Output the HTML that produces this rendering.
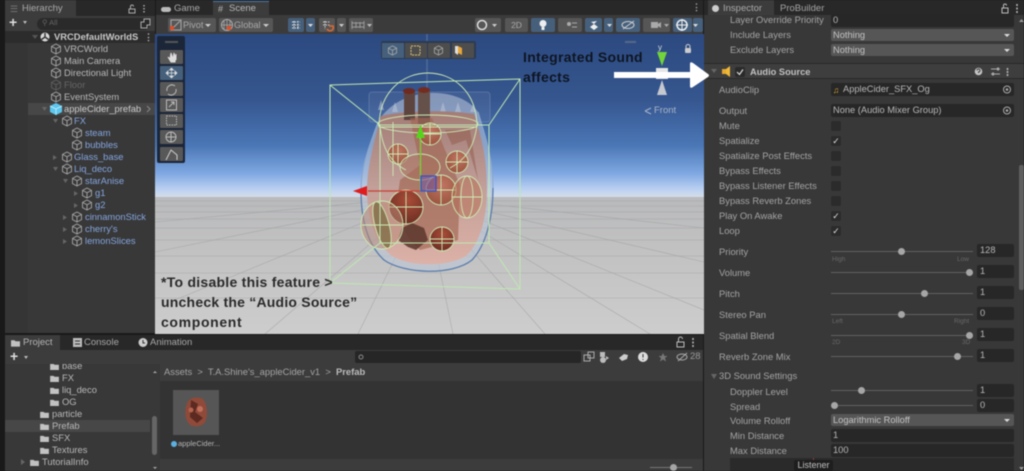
<!DOCTYPE html>
<html lang="en"><head><meta charset="utf-8"><title>Unity Audio Source</title>
<style>
html,body{margin:0;padding:0;background:#191919}
#p{position:relative;width:1024px;height:471px;overflow:hidden;background:#191919;font-family:"Liberation Sans",sans-serif;font-size:9px;color:#b8b8b8;filter:blur(.4px)}
#p div,#p span.t{position:absolute;white-space:nowrap}
.t{line-height:12px;height:12px}
.b{color:#85a5de}
.l{color:#a4a4a4;font-size:9.400px;left:719px}
.l2{left:730px}
.f{background:#272727;border-radius:2px;height:13px;line-height:13px;padding-left:2px;box-sizing:border-box;color:#b8b8b8;font-size:9.300px}
.d{background:#565656;border-radius:2px;left:831px;width:183px;height:12px;line-height:12px;padding-left:2px;box-sizing:border-box;color:#c4c4c4;font-size:9.300px}
.d:after{content:"";position:absolute;right:4px;top:5px;border:3px solid transparent;border-top:3px solid #ddd;border-bottom:0}
.c{left:831px;width:10px;height:10px;background:#2b2b2b;border-radius:2px;color:#ddd;font-size:9px;line-height:10px;text-align:center}
.s{left:831px;width:142px;height:1px;background:#626262}
.th{width:7px;height:7px;border-radius:50%;background:#a6a6a6}
.n{left:977px;width:37px;height:13px;line-height:13px;background:#272727;border-radius:2px;padding-left:3px;box-sizing:border-box;color:#b8b8b8;font-size:9.300px}
.m{font-size:6.500px;color:#686868;line-height:8px}
.btn{top:18px;height:14px;background:#565656;border-radius:2px}
.blue{background:#46607c}
.tool{left:160px;width:23px;height:14px;background:#585858;border-radius:1px}
.mini{top:43px;width:22px;height:15px;background:#4d4d4d}
.cap{font-weight:bold;color:#161616;font-size:14px;line-height:20px;height:20px}
</style></head><body>
<div id="p">
<svg width="0" height="0" style="position:absolute"><defs>
<symbol id="cube" viewBox="0 0 12 12"><path d="M6 1 10.500 3.400V8.600L6 11 1.500 8.600V3.400ZM1.500 3.400 6 5.800 10.500 3.400M6 5.800V11" fill="none" stroke="#a8a8a8" stroke-width=".9"/></symbol>
<symbol id="folder" viewBox="0 0 10 8"><path d="M0 1H4L5 2H10V8H0Z" fill="#c2c2c2"/></symbol>
</defs></svg>

<!-- Hierarchy -->
<div style="left:5px;top:0;width:150px;height:333px;background:#383838"></div>
<div style="left:5px;top:0;width:150px;height:16px;background:#282828"></div>
<div style="left:5px;top:0;width:71px;height:16px;background:#3c3c3c"></div>
<div class="t" style="left:10px;top:3px;color:#777">☰</div>
<div class="t" style="left:22px;top:3px;font-size:9.500px;color:#aaa">Hierarchy</div>
<svg style="position:absolute;left:127px;top:3px" width="20" height="11"><path d="M2 6H8V10H2ZM3.500 6V3.500A1.500 1.500 0 0 1 6.500 3.500" fill="none" stroke="#aaa"/><path d="M17 2V3.500M17 5V6.500M17 8V9.500" stroke="#aaa" stroke-width="1.500"/></svg>
<div style="left:5px;top:16px;width:150px;height:15px;background:#3c3c3c"></div>
<div class="t" style="left:9px;top:16px;font-size:14px;font-weight:bold;color:#ddd">+</div>
<div style="left:23px;top:21px;border:2.500px solid transparent;border-top:3px solid #bbb;border-bottom:0"></div>
<div style="left:37px;top:18px;width:113px;height:12px;background:#2a2a2a;border-radius:6px"></div>
<div class="t" style="left:42px;top:17px;font-size:7.500px;color:#666">⚲ All</div>
<svg style="position:absolute;left:140px;top:18px" width="11" height="11"><path d="M4 1H10V7H7V10H1V4H4Z" fill="none" stroke="#aaa"/></svg>
<div style="left:5px;top:31px;width:150px;height:12px;background:#2c2c2c"></div>
<div style="left:5px;top:103px;width:150px;height:12px;background:#474747"></div>
<div style="left:5px;top:43px;width:23px;height:290px;background:#353535"></div>
<div class="t" style="left:54px;top:31px;font-weight:bold;font-size:9.400px;color:#c8c8c8">VRCDefaultWorldS</div>
<svg style="position:absolute;left:31px;top:32px" width="20" height="10"><path d="M1 3H7L4 7Z" fill="#555"/><circle cx="14" cy="5" r="4.500" fill="#d8d8d8"/><path d="M14 5 14 1M14 5 10.500 7.500M14 5 17.500 7.500" stroke="#333" stroke-width="1.400"/></svg>
<div class="t" style="left:144px;top:31px;font-weight:bold;color:#bbb">⋮</div>
<svg style="position:absolute;left:0;top:0" width="155" height="250">
<g>
<use href="#cube" x="50" y="43" width="12" height="12"/><use href="#cube" x="50" y="55" width="12" height="12"/><use href="#cube" x="50" y="67" width="12" height="12"/><use href="#cube" x="50" y="79" width="12" height="12" opacity=".35"/><use href="#cube" x="50" y="91" width="12" height="12"/>
<use href="#cube" x="61" y="115" width="12" height="12"/><use href="#cube" x="71" y="127" width="12" height="12"/><use href="#cube" x="71" y="139" width="12" height="12"/><use href="#cube" x="61" y="151" width="12" height="12"/><use href="#cube" x="61" y="163" width="12" height="12"/><use href="#cube" x="71" y="175" width="12" height="12"/><use href="#cube" x="81" y="187" width="12" height="12"/><use href="#cube" x="81" y="199" width="12" height="12"/><use href="#cube" x="71" y="211" width="12" height="12"/><use href="#cube" x="71" y="223" width="12" height="12"/><use href="#cube" x="71" y="235" width="12" height="12"/>
</g>
<path d="M56 103 62 106V112L56 115 50 112V106Z" fill="#5cc6ee"/><path d="M50 106 56 109 62 106M56 109V115" stroke="#d8f2fb" stroke-width=".7" fill="none"/>
<path d="M42 107H47L44.500 111ZM53 119H58L55.500 123ZM53 167H58L55.500 171ZM63 179H68L65.500 183Z" fill="#666"/>
<path d="M53 155V160L57 157.500ZM74 191V196L78 193.500ZM74 203V208L78 205.500ZM63 215V220L67 217.500ZM63 227V232L67 229.500ZM63 239V244L67 241.500Z" fill="#666"/>
<path d="M147 106 150 109 147 112" fill="none" stroke="#888"/>
</svg>
<div class="t" style="left:64px;top:43px;font-size:9.400px">VRCWorld</div>
<div class="t" style="left:64px;top:55px;font-size:9.400px">Main Camera</div>
<div class="t" style="left:64px;top:67px;font-size:9.400px">Directional Light</div>
<div class="t" style="left:64px;top:79px;font-size:9.400px;color:#666">Floor</div>
<div class="t" style="left:64px;top:91px;font-size:9.400px">EventSystem</div>
<div class="t" style="left:64px;top:103px;font-size:9.400px;color:#cccccc">appleCider_prefab</div>
<div class="t b" style="left:74px;top:115px;font-size:9.400px">FX</div>
<div class="t b" style="left:85px;top:127px;font-size:9.400px">steam</div>
<div class="t b" style="left:85px;top:139px;font-size:9.400px">bubbles</div>
<div class="t b" style="left:74px;top:151px;font-size:9.400px">Glass_base</div>
<div class="t b" style="left:74px;top:163px;font-size:9.400px">Liq_deco</div>
<div class="t b" style="left:85px;top:175px;font-size:9.400px">starAnise</div>
<div class="t b" style="left:95px;top:187px;font-size:9.400px">g1</div>
<div class="t b" style="left:95px;top:199px;font-size:9.400px">g2</div>
<div class="t b" style="left:85px;top:211px;font-size:9.400px">cinnamonStick</div>
<div class="t b" style="left:85px;top:223px;font-size:9.400px">cherry's</div>
<div class="t b" style="left:85px;top:235px;font-size:9.400px">lemonSlices</div>

<!-- Scene tabs and toolbar -->
<div style="left:156px;top:0;width:547px;height:15px;background:#282828"></div>
<div style="left:213px;top:1px;width:56px;height:14px;background:#3c3c3c;border-top:1px solid #4a78a8;box-sizing:border-box"></div>
<div class="t" style="left:174px;top:3px;font-size:9.500px;color:#aaa">Game</div>
<div class="t" style="left:229px;top:3px;font-size:9.500px;color:#b8b8b8">Scene</div>
<div style="left:161px;top:7px;width:10px;height:5px;background:#bbb;border-radius:3px"></div>
<div class="t" style="left:218px;top:3px;font-size:9px;color:#bbb">#</div>
<div class="t" style="left:692px;top:1px;color:#aaa;font-weight:bold">⋮</div>
<div style="left:156px;top:15px;width:547px;height:19px;background:#3b3b3b"></div>
<div class="btn" style="left:168px;width:48px"></div><div class="btn" style="left:219px;width:54px"></div>
<div class="t" style="left:183px;top:19px;color:#a8a8a8;font-size:9.200px">Pivot</div>
<div class="t" style="left:234px;top:19px;color:#a8a8a8;font-size:9.200px">Global</div>
<svg style="position:absolute;left:170px;top:19px" width="100" height="12"><rect x="1" y="1" width="10" height="10" fill="none" stroke="#aaa"/><path d="M2 10 10 2" stroke="#aaa"/><rect x="0" y="7" width="4" height="4" fill="#d9502a"/><path d="M35 5H41L38 8Z" fill="#ccc"/><circle cx="57" cy="6" r="5.500" fill="none" stroke="#aaa"/><path d="M52 6H62M57 1V11M54 2V10M60 2V10" stroke="#aaa" stroke-width=".7"/><rect x="57" y="7" width="4" height="4" fill="#d9502a"/><path d="M93 5H99L96 8Z" fill="#ccc"/></svg>
<div class="btn blue" style="left:288px;width:16px"></div><div class="btn blue" style="left:306px;width:9px"></div>
<div class="btn" style="left:319px;width:16px"></div><div class="btn" style="left:337px;width:9px"></div>
<div class="btn" style="left:349px;width:24px"></div>
<svg style="position:absolute;left:288px;top:18px" width="90" height="14"><path d="M4 4H12M4 7H12M4 10H12M6 3V11M10 3V11" stroke="#ddd" stroke-dasharray="1.500 1"/><path d="M20 6H25L22.500 9Z" fill="#ddd"/><path d="M35 4H42M35 7H42M37 3V11" stroke="#ccc" stroke-dasharray="1.500 1"/><path d="M39 11A3 3 0 0 0 45 8H41" stroke="#e06a30" stroke-width="1.500" fill="none"/><path d="M51 6H56L53.500 9Z" fill="#ccc"/><path d="M64 3V11M68 4V10M72 4V10M76 3V11M64 5H76M64 9H76" stroke="#999"/><path d="M79 6H84L81.500 9Z" fill="#bbb"/></svg>
<div class="btn" style="left:475px;width:26px"></div><div class="btn" style="left:505px;width:23px;text-align:center;line-height:14px;color:#aaa;font-size:8.500px">2D</div>
<div class="btn blue" style="left:531px;width:24px"></div><div class="btn" style="left:558px;width:24px"></div>
<div class="btn blue" style="left:585px;width:17px"></div><div class="btn blue" style="left:604px;width:9px"></div>
<div class="btn blue" style="left:616px;width:24px"></div><div class="btn" style="left:643px;width:27px"></div>
<div class="btn blue" style="left:673px;width:19px"></div><div class="btn blue" style="left:693px;width:10px"></div>
<svg style="position:absolute;left:474px;top:18px" width="229" height="14"><circle cx="8" cy="7" r="4.500" fill="none" stroke="#ddd" stroke-width="1.500"/><path d="M18 6H23L20.500 9Z" fill="#ccc"/><circle cx="69" cy="5.500" r="3.500" fill="#eee"/><rect x="67.500" y="9" width="3" height="3" fill="#eee"/><circle cx="95" cy="6" r="2" fill="#aaa"/><path d="M98 5H103M98 9H103" stroke="#aaa"/><path d="M116 9 120 6 124 9 120 12ZM117 4 120 6 123 3" fill="#eee"/><path d="M133 6H138L135.500 9Z" fill="#ddd"/><ellipse cx="154" cy="7" rx="6" ry="3.500" fill="none" stroke="#ccc"/><path d="M149 11 160 3" stroke="#ccc"/><rect x="177" y="4" width="7" height="6" fill="#aaa"/><path d="M184 6 187 4V10L184 8ZM190 6H195L192.500 9Z" fill="#aaa"/><circle cx="208" cy="7" r="5" fill="none" stroke="#eee" stroke-width="1.500"/><path d="M202 7H214M208 1V13" stroke="#eee"/><path d="M219 6H224L221.500 9Z" fill="#ddd"/></svg>

<!-- Scene view -->
<svg style="position:absolute;left:155px;top:34px" width="549" height="300" viewBox="155 34 549 300">
<defs>
<linearGradient id="sky" x1="0" y1="0" x2="0" y2="1"><stop offset="0" stop-color="#2c4a80"/><stop offset=".4" stop-color="#36568f"/><stop offset=".68" stop-color="#4b77b6"/><stop offset=".85" stop-color="#7fa8e2"/><stop offset=".95" stop-color="#bcd2f2"/><stop offset="1" stop-color="#d8dee8"/></linearGradient>
<linearGradient id="gr" x1="0" y1="0" x2="0" y2="1"><stop offset="0" stop-color="#b9babc"/><stop offset=".4" stop-color="#c2c2c2"/><stop offset="1" stop-color="#cdcdcd"/></linearGradient>
<linearGradient id="liq" x1="0" y1="0" x2="0" y2="1"><stop offset="0" stop-color="#a67a70"/><stop offset=".5" stop-color="#c39c92"/><stop offset="1" stop-color="#dfb0a4"/></linearGradient>
<radialGradient id="ball" cx=".55" cy=".35" r=".7"><stop offset="0" stop-color="#bf7460"/><stop offset="1" stop-color="#98533f"/></radialGradient>
<radialGradient id="ball2" cx=".55" cy=".3" r=".7"><stop offset="0" stop-color="#a84c38"/><stop offset="1" stop-color="#6e2e24"/></radialGradient>
</defs>
<rect x="155" y="34" width="549" height="164" fill="url(#sky)"/>
<rect x="155" y="197" width="549" height="137" fill="url(#gr)"/>
<g stroke="#9d9ea0" stroke-width=".6" fill="none" opacity=".75">
<path d="M155 201H704M155 206H704M155 212H704M155 219H704M155 228H704M155 240H704M155 256H704M155 273H704M155 298H704"/>
<path d="M425 197 358 334M425 197 265 334M425 197 175 300M425 197 155 252M425 197 155 222M425 197 453 334M425 197 545 334M425 197 650 334M425 197 704 310M425 197 704 262M425 197 704 228"/>
</g>
<path d="M427 34V130" stroke="#6d86aa" stroke-width="1.500" opacity=".5"/>
<rect x="369" y="92" width="121" height="30" rx="3" fill="#7b90b5" fill-opacity=".16" stroke="#8498ba" stroke-opacity=".4"/>
<path d="M378 110 381 100 384 110ZM392 112 395 102 398 112ZM440 112 443 102 446 112ZM455 112 458 102 461 112ZM470 112 473 104 476 112" fill="#c8d0e0" opacity=".5"/>
<!-- jar -->
<path d="M378 122C370 145 361 165 361 190C361 222 369 246 384 260 404 274 452 276 472 260 487 244 493 215 493 188 493 160 486 138 478 112 460 86 400 84 378 122Z" fill="#bcc6d8" fill-opacity=".55"/>
<path d="M381 116C373 146 367 168 367 190 367 218 376 244 392 256 410 267 448 267 466 256 481 242 487 216 487 188 487 160 482 138 474 114 450 110 405 110 381 116Z" fill="url(#liq)" fill-opacity=".92"/>
<path d="M361 190C361 222 369 246 384 260 404 274 452 276 472 260 487 244 493 215 493 188" fill="none" stroke="#5a7cab" stroke-width="1.300"/>
<path d="M378 122C370 145 361 165 361 190M493 188C493 160 486 138 478 112" fill="none" stroke="#8aa6cc" stroke-width="1.100"/>
<!-- contents -->
<rect x="404" y="90" width="11" height="30" fill="#5e443f"/><rect x="418" y="90" width="12" height="34" fill="#66504a"/>
<ellipse cx="409" cy="91" rx="6" ry="3" fill="#6e2a20"/><ellipse cx="424" cy="90" rx="6" ry="3" fill="#742c20"/>
<path d="M410 118H432L445 150 460 185 458 240 440 245 420 250 410 240 395 215 400 180 420 165Z" fill="#a06552" opacity=".65"/>
<path d="M402 228 412 223 424 228 428 240 416 250 408 247 398 240Z" fill="#5f3a30" opacity=".9"/>
<path d="M445 130H470L478 180 466 140 452 145Z" fill="#8f5a4a" opacity=".5"/>
<g stroke="#cdeab4" stroke-width=".9">
<circle cx="406" cy="207" r="17" fill="url(#ball2)"/><circle cx="441" cy="190" r="15" fill="url(#ball)"/><circle cx="457" cy="162" r="11" fill="url(#ball)"/><circle cx="398" cy="154" r="10" fill="url(#ball)"/><circle cx="442" cy="239" r="12" fill="url(#ball2)"/><circle cx="430" cy="134" r="11" fill="url(#ball)"/>
</g>
<g stroke="#cdeab4" stroke-width=".9" fill="none">
<path d="M389 207H423M406 190V224M426 190H456M441 175V205M446 162H468M457 151V173M388 154H408M398 144V164M430 239H454M442 227V251M419 134H441M430 123V145"/>
<ellipse cx="382" cy="225" rx="21" ry="24" fill="#b98a78" fill-opacity=".55"/><ellipse cx="382" cy="225" rx="7" ry="24" fill="#77683e" fill-opacity=".7" transform="rotate(-15 382 225)"/><path d="M362 225H403"/>
<ellipse cx="467" cy="197" rx="15" ry="21" fill="#b77058" fill-opacity=".55"/><ellipse cx="467" cy="197" rx="6" ry="21"/><path d="M452 197H482"/>
<ellipse cx="420" cy="167" rx="20" ry="13" fill="#a8705c" fill-opacity=".5"/>
<path d="M379 127C379 55 477 55 477 127"/>
<ellipse cx="428" cy="124" rx="50" ry="9"/><path d="M379 127H477"/>
<path d="M393 122V176M380 125C382 148 390 162 406 170M477 125C474 148 465 160 450 168"/>
</g>
<!-- bounds box -->
<g stroke="#bfe7b2" stroke-width="1" fill="none">
<path d="M330 85 520 79V289L330 283ZM380 125H489V243H380ZM330 85 380 125M520 79 489 125M330 283 380 243M520 289 489 243"/>
</g>
<!-- gizmo -->
<path d="M420.500 134V191" stroke="#7fc93a" stroke-width="1.500"/><path d="M420.500 125 425 138H416Z" fill="#56d41a"/>
<path d="M368 191H420" stroke="#c94236" stroke-width="1.200"/><path d="M353 191 367 186V196Z" fill="#e01c1c"/>
<rect x="421" y="176" width="15" height="15" fill="#7a5a9a" fill-opacity=".65" stroke="#3452c8" stroke-width="1.200"/>
<!-- nav gizmo -->
<rect x="625" y="41" width="11" height="2" fill="#56688a"/>
<path d="M662 66 657 52H667Z" fill="#72d43a"/><rect x="656" y="68" width="12" height="11" fill="#e6e6e6"/><path d="M662 80 657 95H667Z" fill="#c5c8cf"/>
<rect x="685" y="48" width="6" height="5" rx="1" fill="#ccc"/><path d="M686 48V46.500A2 2 0 0 1 690 46.500V48" fill="none" stroke="#ccc"/>
<path d="M645 111 651 108M645 111 651 114" stroke="#a6b3c9"/>
</svg>
<div class="t" style="left:658px;top:42px;color:#ddd;font-size:8px">y</div>
<div class="t" style="left:654px;top:105px;color:#a8b4c8;font-size:9.500px">Front</div>

<div style="left:157px;top:36px;width:28px;height:127px;background:#1b2638;border-radius:2px"></div>
<div style="left:165px;top:41px;width:13px;height:2px;background:#555"></div>
<div class="tool" style="top:50px"></div><div class="tool" style="top:66px;background:#46607c"></div><div class="tool" style="top:82px"></div><div class="tool" style="top:98px"></div><div class="tool" style="top:114px"></div><div class="tool" style="top:130px"></div><div class="tool" style="top:147px"></div>
<svg style="position:absolute;left:160px;top:50px" width="23" height="112"><path d="M8 7 11 12H15L16 4V10L14 3 13 9 11 3 10 9Z" fill="#ddd" stroke="#ddd"/><path d="M6 23H17M11.500 18V28M6 23 8 21V25ZM17 23 15 21V25ZM11.500 18 9.500 20H13.500ZM11.500 28 9.500 26H13.500Z" fill="#ddd" stroke="#ddd" stroke-width=".7"/><path d="M7 41A5 5 0 0 1 15 36M16 39A5 5 0 0 1 8 44" fill="none" stroke="#bbb"/><rect x="6.500" y="50" width="10" height="10" fill="none" stroke="#bbb"/><path d="M9 57 14 52M11 52H14V55" fill="none" stroke="#bbb"/><rect x="6.500" y="66" width="10" height="9" fill="none" stroke="#bbb" stroke-dasharray="1.500 1"/><circle cx="11" cy="87" r="5" fill="none" stroke="#bbb"/><path d="M6 87H16M11 82V92" stroke="#bbb"/><path d="M6 110 11 100 17 105V110" fill="none" stroke="#ccc"/></svg>
<div style="left:381px;top:41px;width:95px;height:18px;background:#2c3a50;border-radius:2px"></div>
<div class="mini" style="left:382px;background:#46607c"></div><div class="mini" style="left:405px"></div><div class="mini" style="left:428px"></div><div class="mini" style="left:452px"></div>
<svg style="position:absolute;left:382px;top:43px" width="94" height="15"><use href="#cube" x="5" y="2" width="11" height="11"/><rect x="29" y="3" width="9" height="9" fill="none" stroke="#d9c27a" stroke-dasharray="2 1"/><use href="#cube" x="51" y="2" width="11" height="11"/><path d="M76 3 80 5V12L76 10Z" fill="#e8a63a"/><path d="M76 3H73V10L76 12Z" fill="#ddd"/></svg>

<div class="cap" style="left:523px;top:47px;letter-spacing:.3px;color:#0e1522">Integrated Sound</div>
<div class="cap" style="left:523px;top:67px;letter-spacing:.3px;color:#0e1522">affects</div>
<div class="cap" style="left:161px;top:272px;color:#2a2a2a;letter-spacing:.26px">*To disable this feature &gt;</div>
<div class="cap" style="left:161px;top:292px;color:#2a2a2a;letter-spacing:.22px">uncheck the “Audio Source”</div>
<div class="cap" style="left:161px;top:312px;color:#2a2a2a;letter-spacing:.65px">component</div>

<!-- Project -->
<div style="left:5px;top:335px;width:698px;height:136px;background:#333"></div>
<div style="left:5px;top:350px;width:155px;height:121px;background:#383838"></div>
<!-- project tree -->
<div style="left:5px;top:420px;width:145px;height:12px;background:#474747"></div>
<svg style="position:absolute;left:0;top:360px" width="160" height="111"><use href="#folder" x="50" y="3" width="9" height="7"/><use href="#folder" x="50" y="15" width="9" height="7"/><use href="#folder" x="50" y="27" width="9" height="7"/><use href="#folder" x="50" y="39" width="9" height="7"/><use href="#folder" x="40" y="51" width="9" height="7"/><use href="#folder" x="40" y="63" width="9" height="7"/><use href="#folder" x="40" y="75" width="9" height="7"/><use href="#folder" x="40" y="87" width="9" height="7"/><use href="#folder" x="30" y="99" width="9" height="7"/><path d="M21 99V105L25 102Z" fill="#666"/><rect x="152" y="56" width="5" height="39" rx="2.500" fill="#666"/><path d="M153 13 155 11 157 13ZM153 107 155 109 157 107Z" fill="#aaa"/></svg>
<div class="t" style="left:62px;top:360px;font-size:9.400px">base</div>
<div class="t" style="left:62px;top:372px;font-size:9.400px">FX</div>
<div class="t" style="left:62px;top:384px;font-size:9.400px">liq_deco</div>
<div class="t" style="left:62px;top:396px;font-size:9.400px">OG</div>
<div class="t" style="left:52px;top:408px;font-size:9.400px">particle</div>
<div class="t" style="left:52px;top:420px;font-size:9.400px">Prefab</div>
<div class="t" style="left:52px;top:432px;font-size:9.400px">SFX</div>
<div class="t" style="left:52px;top:444px;font-size:9.400px">Textures</div>
<div class="t" style="left:42px;top:456px;font-size:9.400px">TutorialInfo</div>

<div style="left:5px;top:335px;width:698px;height:15px;background:#282828"></div>
<div style="left:5px;top:350px;width:698px;height:14px;background:#3c3c3c"></div>
<div style="left:5px;top:335px;width:55px;height:15px;background:#3c3c3c"></div>
<div class="t" style="left:23px;top:337px;font-size:9.500px;color:#b5b5b5">Project</div>
<div class="t" style="left:84px;top:337px;font-size:9.500px;color:#a8a8a8">Console</div>
<div class="t" style="left:150px;top:337px;font-size:9.500px;color:#a8a8a8">Animation</div>
<svg style="position:absolute;left:10px;top:338px" width="140" height="10"><use href="#folder" x="1" y="1" width="9" height="8"/><rect x="63" y="0" width="9" height="9" fill="#bbb"/><path d="M65 3H70M65 6H70" stroke="#333"/><circle cx="133" cy="4.500" r="4.500" fill="#ccc"/><path d="M133 2V5H135" stroke="#333" fill="none"/></svg>
<div class="t" style="left:10px;top:350px;font-size:14px;font-weight:bold;color:#ddd">+</div>
<div style="left:24px;top:356px;border:2.500px solid transparent;border-top:3px solid #bbb;border-bottom:0"></div>
<svg style="position:absolute;left:675px;top:335px" width="28" height="14"><path d="M2 7H9V12H2ZM3.500 7V4A2 2 0 0 1 7.500 4" fill="none" stroke="#bbb"/><path d="M18 3V5M18 6.500V8.500M18 10V12" stroke="#bbb" stroke-width="1.500"/></svg>
<div style="left:355px;top:351px;width:226px;height:12px;background:#262626;border-radius:2px"></div>
<svg style="position:absolute;left:355px;top:351px" width="350" height="13"><circle cx="6" cy="6" r="2" fill="none" stroke="#888"/><rect x="229" y="4" width="6" height="6" fill="none" stroke="#aaa"/><rect x="233" y="1" width="6" height="6" fill="none" stroke="#aaa"/><circle cx="248" cy="9" r="3" fill="#bbb"/><rect x="245" y="1" width="5" height="5" fill="#bbb"/><path d="M251 5 254 7 251 9Z" fill="#bbb"/><path d="M264 7 269 3 273 4 272 8 267 10Z" fill="#ccc"/><circle cx="288" cy="6" r="5" fill="#ddd"/><path d="M288 3V6.500M288 8V9" stroke="#333"/><path d="M308 2 309.500 5H312.500L310 7 311 10.500 308 8.500 305 10.500 306 7 303.500 5H306.500Z" fill="#777"/><ellipse cx="327" cy="6" rx="5" ry="3" fill="none" stroke="#aaa"/><path d="M323 10 332 2" stroke="#aaa"/></svg>
<div class="t" style="left:690px;top:351px;font-size:9.500px;color:#999">28</div>
<div style="left:160px;top:364px;width:543px;height:17px;background:#3c3c3c"></div>
<div class="t" style="left:164px;top:366px;font-size:9.400px;color:#a4a4a4">Assets &nbsp;&gt;&nbsp; T.A.Shine's_appleCider_v1 &nbsp;&gt;&nbsp; <b style="color:#bcbcbc">Prefab</b></div>
<div style="left:160px;top:459px;width:543px;height:12px;background:#3c3c3c"></div>
<div style="left:650px;top:467px;width:42px;height:1px;background:#777"></div>
<div class="th" style="left:670px;top:464px"></div>
<div style="left:173px;top:390px;width:46px;height:45px;background:#565656"></div>
<svg style="position:absolute;left:173px;top:390px" width="46" height="45"><path d="M14 13C11 22 12 30 17 35 24 38 31 36 33 30 35 22 34 14 30 9 24 6 17 7 14 13Z" fill="#8f4a3a"/><path d="M18 10 25 14 22 22 30 28 24 33 17 27Z" fill="#5c2a20"/><circle cx="27" cy="19" r="3" fill="#c0705a"/><circle cx="18" cy="20" r="2.500" fill="#b3634e"/></svg>
<div style="left:171px;top:441px;width:6px;height:6px;background:#5cb0e0;border-radius:50%"></div>
<div class="t" style="left:178px;top:438px;font-size:7.500px;color:#b5b5b5">appleCider...</div>

<!-- Inspector -->
<div style="left:704px;top:0;width:320px;height:471px;background:#383838"></div>
<div style="left:704px;top:0;width:320px;height:15px;background:#282828"></div>
<div style="left:708px;top:0;width:66px;height:15px;background:#3c3c3c"></div>
<div style="left:712px;top:5px;width:7px;height:7px;border-radius:50%;background:#ccc"></div>
<div class="t" style="left:723px;top:3px;font-size:9.500px;color:#aaa">Inspector</div>
<div class="t" style="left:780px;top:3px;font-size:9.500px;color:#a4a4a4">ProBuilder</div>
<svg style="position:absolute;left:1000px;top:2px" width="22" height="12"><path d="M2 6H8V11H2ZM3.500 6V3.500A1.500 1.500 0 0 1 6.500 3.500" fill="none" stroke="#bbb"/><path d="M17 2V4M17 5.500V7.500M17 9V11" stroke="#bbb" stroke-width="1.500"/></svg>
<div class="t l l2" style="top:14px">Layer Override Priority</div><div class="f" style="left:831px;top:14px;width:183px">0</div>
<div class="t l l2" style="top:29px">Include Layers</div><div class="d" style="top:29px">Nothing</div>
<div class="t l l2" style="top:44px">Exclude Layers</div><div class="d" style="top:44px">Nothing</div>
<div style="left:704px;top:63px;width:320px;height:16px;background:#3e3e3e;border-top:1px solid #282828;border-bottom:1px solid #282828;box-sizing:border-box"></div>
<svg style="position:absolute;left:710px;top:66px" width="38" height="12"><path d="M1 3H7L4 7Z" fill="#666"/><rect x="12" y="3" width="4" height="5" fill="#e5a92f"/><path d="M16 3 20 0V11L16 8Z" fill="#eeb838"/><rect x="25" y="1" width="10" height="10" rx="2" fill="#2a2a2a"/><path d="M27 6 29.500 8.500 33 3.500" fill="none" stroke="#ddd" stroke-width="1.200"/></svg>
<div class="t" style="left:750px;top:66px;font-weight:bold;font-size:9.300px;color:#c0c0c0">Audio Source</div>
<svg style="position:absolute;left:974px;top:66px" width="40" height="12"><circle cx="4.500" cy="5.500" r="3.800" fill="#c4c4c4"/><path d="M3 4.500A1.500 1.500 0 1 1 4.500 6V7" stroke="#444" fill="none"/><path d="M17 3H26M17 8H26" stroke="#aaa"/><rect x="23" y="1.500" width="2" height="3" fill="#aaa"/><rect x="18" y="6.500" width="2" height="3" fill="#aaa"/><path d="M33.500 2V4M33.500 5V7M33.500 8V10" stroke="#bbb" stroke-width="1.500"/></svg>
<div class="t l" style="top:84px">AudioClip</div><div class="f" style="left:831px;top:83px;width:183px;padding-left:12px">AppleCider_SFX_Og</div>
<div class="t" style="left:833px;top:84px;color:#e0a82e;font-size:8.500px">♫</div>
<div class="t l" style="top:105px">Output</div><div class="f" style="left:831px;top:104px;width:183px">None (Audio Mixer Group)</div>
<svg style="position:absolute;left:1002px;top:84px" width="12" height="33"><circle cx="5" cy="5.500" r="3.500" fill="none" stroke="#aaa"/><circle cx="5" cy="5.500" r="1.300" fill="#aaa"/><circle cx="5" cy="26.500" r="3.500" fill="none" stroke="#aaa"/><circle cx="5" cy="26.500" r="1.300" fill="#aaa"/></svg>
<div class="t l" style="top:120px">Mute</div><div class="c" style="top:121px"></div>
<div class="t l" style="top:135px">Spatialize</div><div class="c" style="top:136px">✓</div>
<div class="t l" style="top:150px">Spatialize Post Effects</div><div class="c" style="top:151px"></div>
<div class="t l" style="top:165px">Bypass Effects</div><div class="c" style="top:166px"></div>
<div class="t l" style="top:180px">Bypass Listener Effects</div><div class="c" style="top:181px"></div>
<div class="t l" style="top:195px">Bypass Reverb Zones</div><div class="c" style="top:196px"></div>
<div class="t l" style="top:210px">Play On Awake</div><div class="c" style="top:211px">✓</div>
<div class="t l" style="top:225px">Loop</div><div class="c" style="top:226px">✓</div>

<div class="t l" style="top:246px">Priority</div><div class="s" style="top:251px"></div><div class="th" style="left:898px;top:248px"></div><div class="n" style="top:244px">128</div>
<div class="t m" style="left:832px;top:256px">High</div><div class="t m" style="left:957px;top:256px">Low</div>
<div class="t l" style="top:267px">Volume</div><div class="s" style="top:272px"></div><div class="th" style="left:966px;top:269px"></div><div class="n" style="top:265px">1</div>
<div class="t l" style="top:288px">Pitch</div><div class="s" style="top:293px"></div><div class="th" style="left:921px;top:290px"></div><div class="n" style="top:286px">1</div>
<div class="t l" style="top:309px">Stereo Pan</div><div class="s" style="top:314px"></div><div class="th" style="left:898px;top:311px"></div><div class="n" style="top:307px">0</div>
<div class="t m" style="left:832px;top:318px">Left</div><div class="t m" style="left:954px;top:318px">Right</div>
<div class="t l" style="top:330px">Spatial Blend</div><div class="s" style="top:335px"></div><div class="th" style="left:966px;top:332px"></div><div class="n" style="top:328px">1</div>
<div class="t m" style="left:832px;top:339px">2D</div><div class="t m" style="left:962px;top:339px">3D</div>
<div class="t l" style="top:351px">Reverb Zone Mix</div><div class="s" style="top:356px"></div><div class="th" style="left:954px;top:353px"></div><div class="n" style="top:349px">1</div>
<div style="left:711px;top:374px;border:3px solid transparent;border-top:5px solid #666;border-bottom:0"></div>
<div class="t l" style="top:370px">3D Sound Settings</div>
<div class="t l l2" style="top:386px">Doppler Level</div><div class="s" style="top:390px"></div><div class="th" style="left:858px;top:387px"></div><div class="n" style="top:384px">1</div>
<div class="t l l2" style="top:401px">Spread</div><div class="s" style="top:405px"></div><div class="th" style="left:831px;top:402px"></div><div class="n" style="top:399px">0</div>
<div class="t l l2" style="top:415px">Volume Rolloff</div><div class="d" style="top:414px">Logarithmic Rolloff</div>
<div class="t l l2" style="top:430px">Min Distance</div><div class="f" style="left:831px;top:429px;width:183px">1</div>
<div class="t l l2" style="top:445px">Max Distance</div><div class="f" style="left:831px;top:444px;width:183px">100</div>
<div style="left:730px;top:458px;width:284px;height:13px;background:#2a2a2a"></div>
<div style="left:813px;top:458px;width:1px;height:3px;background:#a03a3a"></div>
<div style="left:794px;top:460px;width:39px;height:11px;background:#1e1e1e;border-radius:2px;text-align:center;line-height:11px;color:#c0c0c0;font-size:9px">Listener</div>
<div style="left:1019px;top:165px;width:5px;height:125px;background:#5f5f5f;border-radius:2px"></div>
<svg style="position:absolute;left:1019px;top:18px" width="5" height="5"><path d="M0 4 2.500 1 5 4Z" fill="#999"/></svg>
<svg style="position:absolute;left:1019px;top:466px" width="5" height="5"><path d="M0 1 2.500 4 5 1Z" fill="#999"/></svg>

<!-- white arrow, overlaps the inspector -->
<svg style="position:absolute;left:610px;top:58px" width="102" height="34"><path d="M4 14H80V6Q80 3 83 5L98 16Q100 17 98 19L83 29Q80 31 80 28V20H4Z" fill="#fff"/></svg>
</div>
</body></html>
